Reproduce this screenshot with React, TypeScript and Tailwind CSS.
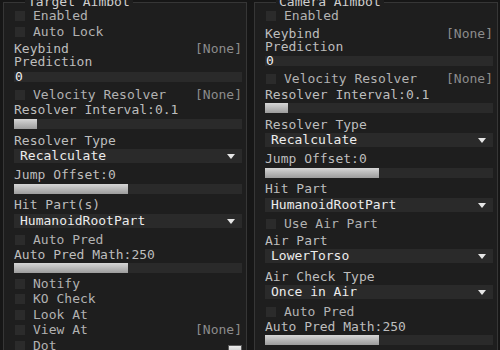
import React from "react";

type CheckProps = { label: string; right?: string; compact?: boolean; swatch?: boolean; className?: string };

function Check({ label, right, compact, swatch, className = "" }: CheckProps) {
  return (
    <div className={`flex items-center ${compact ? "h-[15.5px]" : "h-[16px]"} ${className}`}>
      <span className="ml-[1px] h-[10px] w-[10px] shrink-0 bg-[#2b2b2b]" />
      <span className="ml-[8px] leading-[16px] text-[#b2b2b2]">{label}</span>
      {right && <span className="ml-auto leading-[16px] text-[#8c8c8c]">{right}</span>}
      {swatch && (
        <span className="ml-auto mt-[10px] h-[11px] w-[14px] border border-[#5a5a5a] bg-gradient-to-b from-[#ececec] to-[#bdbdbd]" />
      )}
    </div>
  );
}

function Label({ text, right, className = "" }: { text: string; right?: string; className?: string }) {
  return (
    <div className={`flex h-[13px] items-center leading-[13px] ${className}`}>
      <span className="text-[#bdbdbd]">{text}</span>
      {right && <span className="ml-auto text-[#8c8c8c]">{right}</span>}
    </div>
  );
}

function Bar({ fill, text, className = "" }: { fill?: number; text?: string; className?: string }) {
  return (
    <div className={`relative h-[10px] bg-[#2a2a2a] ${className}`}>
      {fill !== undefined && (
        <div
          className="h-full bg-gradient-to-b from-[#d6d6d6] to-[#9c9c9c]"
          style={{ width: `${fill}%` }}
        />
      )}
      {text && <span className="block pl-[1px] leading-[10px] text-[#eeeeee]">{text}</span>}
    </div>
  );
}

function Drop({ value, className = "" }: { value: string; className?: string }) {
  return (
    <div className={`flex h-[14px] items-center bg-[#2a2a2a] pl-[6px] pr-[7px] ${className}`}>
      <span className="leading-[14px] text-[#ececec]">{value}</span>
      <svg className="ml-auto" width="8" height="5" viewBox="0 0 8 5">
        <polygon points="0,0 8,0 4,5" fill="#e6e6e6" />
      </svg>
    </div>
  );
}

function Panel({ title, offset, children }: { title: string; offset: "left" | "right"; children: React.ReactNode }) {
  return (
    <div
      className={`relative mt-[2px] h-[360px] border border-[#363636] bg-[#1e1e1e] pt-[5px] pl-[10px] pr-[4px] ${
        offset === "left" ? "ml-[3px] w-[244px]" : "ml-[4px] w-[244px]"
      }`}
    >
      <span className="absolute left-[21px] top-[-8px] bg-[#1e1e1e] px-[3px] leading-[13px] text-[#cfcfcf]">
        {title}
      </span>
      {children}
    </div>
  );
}

export default function App() {
  return (
    <div className="flex h-[350px] w-[500px] overflow-hidden bg-[#161616] text-[13px] [font-family:'DejaVu_Sans_Mono',monospace]">
      <div className="w-[250px]">
        <Panel title="Target Aimbot" offset="left">
          <Check label="Enabled" />
          <Check label="Auto Lock" />
          <Label text="Keybind" right="[None]" className="mt-[2px]" />
          <Label text="Prediction" />
          <Bar text="0" className="mt-[4px]" />
          <Check label="Velocity Resolver" right="[None]" className="mt-[5px]" />
          <Label text="Resolver Interval:0.1" />
          <Bar fill={10} className="mt-[3px]" />
          <Label text="Resolver Type" className="mt-[5px]" />
          <Drop value="Recalculate" className="mt-[2px]" />
          <Label text="Jump Offset:0" className="mt-[5px]" />
          <Bar fill={50} className="mt-[3px]" />
          <Label text="Hit Part(s)" className="mt-[4px]" />
          <Drop value="HumanoidRootPart" className="mt-[3px]" />
          <Check label="Auto Pred" className="mt-[4px]" />
          <Label text="Auto Pred Math:250" />
          <Bar fill={50} className="mt-[2px]" />
          <Check label="Notify" compact className="mt-[3px]" />
          <Check label="KO Check" compact />
          <Check label="Look At" compact />
          <Check label="View At" right="[None]" compact />
          <Check label="Dot" compact swatch />
        </Panel>
      </div>
      <div className="w-[250px]">
        <Panel title="Camera Aimbot" offset="right">
          <Check label="Enabled" />
          <Label text="Keybind" right="[None]" className="mt-[3px]" />
          <Label text="Prediction" />
          <Bar text="0" className="mt-[3px]" />
          <Check label="Velocity Resolver" right="[None]" className="mt-[5px]" />
          <Label text="Resolver Interval:0.1" className="mt-[1px]" />
          <Bar fill={10} className="mt-[2px]" />
          <Label text="Resolver Type" className="mt-[5px]" />
          <Drop value="Recalculate" className="mt-[2px]" />
          <Label text="Jump Offset:0" className="mt-[5px]" />
          <Bar fill={50} className="mt-[3px]" />
          <Label text="Hit Part" className="mt-[4px]" />
          <Drop value="HumanoidRootPart" className="mt-[3px]" />
          <Check label="Use Air Part" className="mt-[4px]" />
          <Label text="Air Part" className="mt-[2px]" />
          <Drop value="LowerTorso" className="mt-[2px]" />
          <Label text="Air Check Type" className="mt-[7px]" />
          <Drop value="Once in Air" className="mt-[2px]" />
          <Check label="Auto Pred" className="mt-[5px]" />
          <Label text="Auto Pred Math:250" />
          <Bar fill={50} className="mt-[2px]" />
        </Panel>
      </div>
    </div>
  );
}
